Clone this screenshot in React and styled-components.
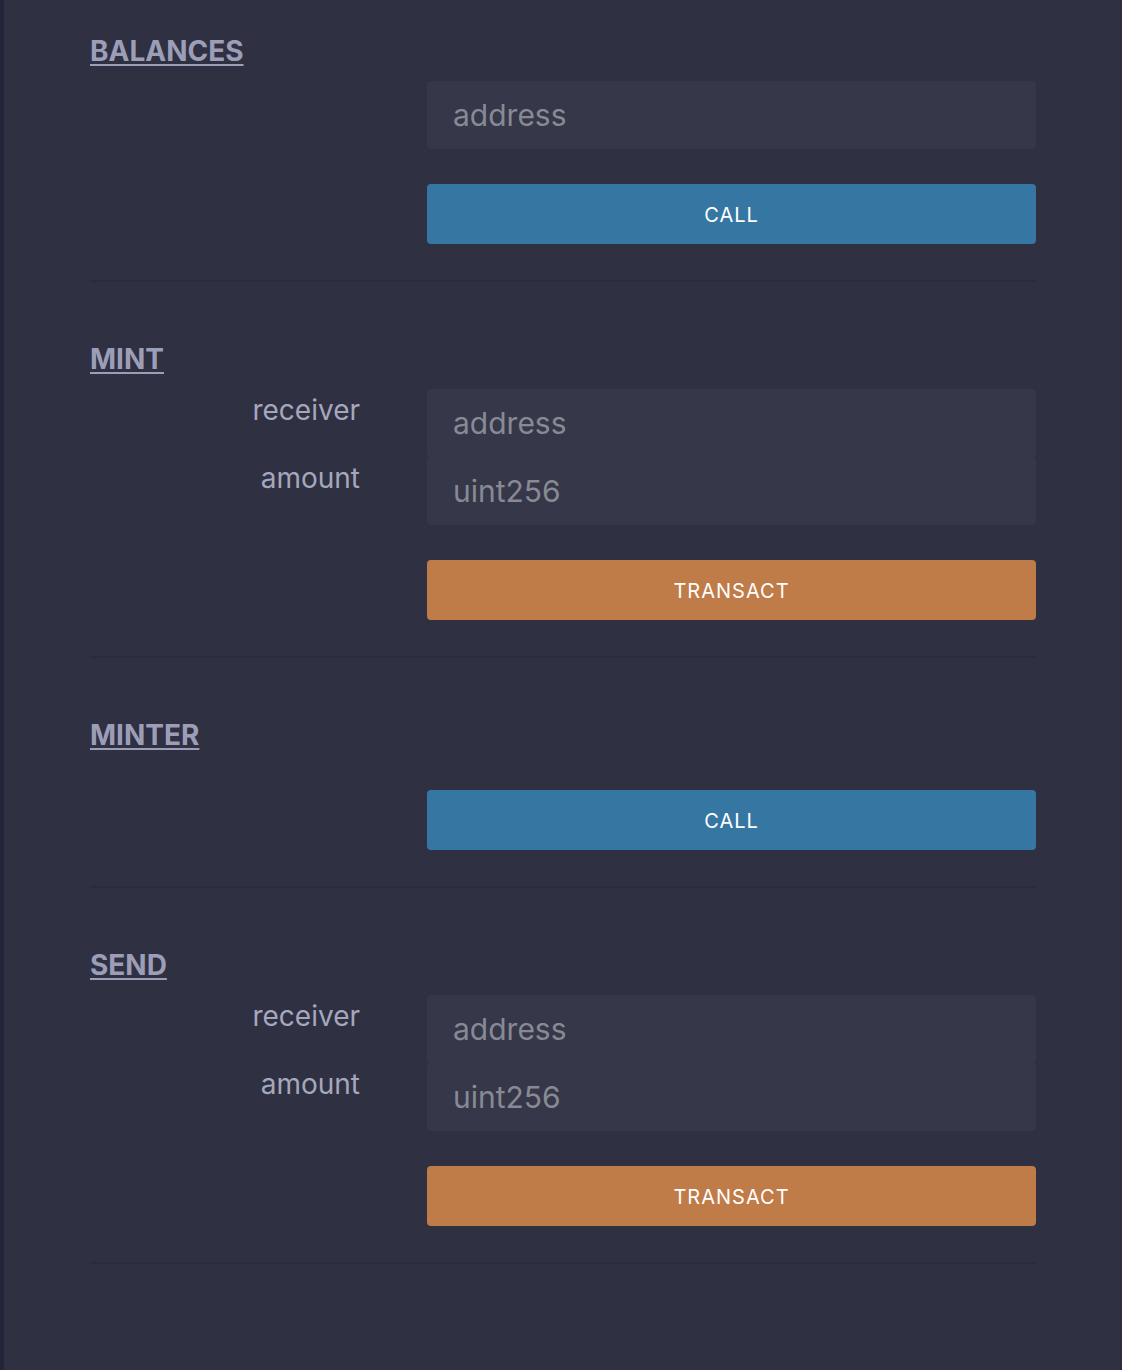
import styled, { createGlobalStyle } from "styled-components";

const GlobalStyle = createGlobalStyle`
  html, body {
    margin: 0;
    padding: 0;
    background: #2f3042;
  }
  body {
    font-family: Inter, "Noto Sans", "Liberation Sans", sans-serif;
    -webkit-font-smoothing: antialiased;
  }
`;

const Page = styled.div`
  box-sizing: border-box;
  min-height: 1370px;
  background: #2f3042;
  border-left: 4px solid #24253a;
  border-right: 2px solid #2b2c3d;
  padding: 33px 84px 0 86px;
`;

const Section = styled.section`
  width: 946px;
  padding-top: ${props => (props.first ? "0" : "59px")};
  padding-bottom: 36px;
  border-bottom: 2px solid #2a2b3b;
`;

const Title = styled.h2`
  margin: 0 0 12px;
  font-size: 28px;
  line-height: 36px;
  font-weight: 700;
  color: #9c9eb8;
  text-decoration: underline;
  text-decoration-thickness: 2px;
  text-underline-offset: 3px;
`;

const Fields = styled.div`
  display: grid;
  grid-template-columns: 270px 609px;
  column-gap: 67px;
`;

const Label = styled.label`
  box-sizing: border-box;
  height: 68px;
  padding-top: 4px;
  text-align: right;
  font-size: 28px;
  line-height: 34px;
  color: #a5a7bd;
`;

const Input = styled.input`
  box-sizing: border-box;
  width: 609px;
  height: 68px;
  padding: 0 26px;
  border: none;
  border-radius: 4px;
  background: #363748;
  font-family: inherit;
  font-size: 30px;
  color: #c9cad6;
  outline: none;

  &::placeholder {
    color: #878a95;
  }
`;

const Button = styled.button`
  display: block;
  box-sizing: border-box;
  width: 609px;
  height: 60px;
  margin: ${props => (props.bare ? "37px" : "35px")} 0 0 337px;
  padding-top: 3px;
  border: none;
  border-radius: 4px;
  background: ${props => (props.kind === "transact" ? "#bf7b48" : "#3577a2")};
  color: #ffffff;
  font-family: inherit;
  font-size: 20px;
  letter-spacing: 1px;
  cursor: pointer;
`;

const sections = [
  { name: "BALANCES", fields: [{ label: "", type: "address" }], action: "call" },
  {
    name: "MINT",
    fields: [
      { label: "receiver", type: "address" },
      { label: "amount", type: "uint256" },
    ],
    action: "transact",
  },
  { name: "MINTER", fields: [], action: "call" },
  {
    name: "SEND",
    fields: [
      { label: "receiver", type: "address" },
      { label: "amount", type: "uint256" },
    ],
    action: "transact",
  },
];

const App = () => (
  <>
    <GlobalStyle />
    <Page>
      {sections.map((s, i) => (
        <Section key={s.name} first={i === 0}>
          <Title>{s.name}</Title>
          {s.fields.length > 0 && (
            <Fields>
              {s.fields.map(f => [
                <Label key={f.type + "-label"}>{f.label}</Label>,
                <Input key={f.type + "-input"} placeholder={f.type} />,
              ])}
            </Fields>
          )}
          <Button kind={s.action} bare={s.fields.length === 0}>
            {s.action === "call" ? "CALL" : "TRANSACT"}
          </Button>
        </Section>
      ))}
    </Page>
  </>
);

export default App;
